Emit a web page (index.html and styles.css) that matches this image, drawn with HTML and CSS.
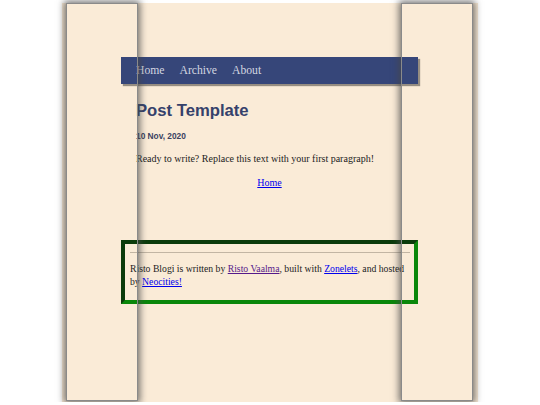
FILE: index.html
```html
<!DOCTYPE html>
<html lang="en">
<head>
<meta charset="utf-8">
<title>Post Template</title>
<link rel="stylesheet" href="styles.css">
</head>
<body>
<div class="page">
  <div class="pillar pillar-left"></div>
  <div class="pillar pillar-right"></div>
  <div class="content">
    <nav class="nav">
      <a href="#">Home</a>
      <a href="#">Archive</a>
      <a href="#">About</a>
    </nav>
    <main class="post">
      <h1 class="title">Post Template</h1>
      <p class="date">10 Nov, 2020</p>
      <p class="text">Ready to write? Replace this text with your first paragraph!</p>
      <p class="text center"><a href="#">Home</a></p>
    </main>
    <footer class="footer">
      <hr class="rule">
      <p class="text footer-text">Risto Blogi is written by <a class="visited" href="#">Risto Vaalma</a>, built with <a href="#">Zonelets</a>, and hosted by <a href="#">Neocities!</a></p>
    </footer>
  </div>
</div>
</body>
</html>
```
FILE: styles.css
```css
html, body {
  margin: 0;
  padding: 0;
  background: #ffffff;
}

.page {
  position: relative;
  width: 416px;
  height: 399px;
  margin: 3px auto 0;
  background: #faebd7;
}

.pillar {
  position: absolute;
  top: 0;
  bottom: 1px;
  width: 70px;
  border: 1px solid #8a8a8a;
  box-shadow: 0 0 7px 2px rgba(70, 70, 70, 0.75);
  z-index: 2;
  pointer-events: none;
}

.pillar-left {
  left: 4px;
}

.pillar-right {
  left: 339px;
}

.content {
  width: 297px;
  margin-left: 59px;
  padding-top: 54px;
}

.nav {
  display: flex;
  gap: 15px;
  height: 27px;
  padding-left: 15px;
  background: #364679;
  box-shadow: 2px 2px 1px rgba(0, 0, 0, 0.4);
}

.nav a {
  font: 11.67px/27px "Liberation Serif", serif;
  color: #d3d6e0;
  text-decoration: none;
}

.post {
  padding: 0 15px;
}

.title {
  margin: 17px 0 0;
  font: 700 16.67px/20px "Liberation Sans", Arial, sans-serif;
  color: #35416b;
}

.date {
  margin: 10px 0 0;
  font: 700 8.33px/10px "Liberation Sans", Arial, sans-serif;
  color: #3b4261;
}

.text {
  margin: 12px 0 0;
  font: 10px/12px "Liberation Serif", serif;
  color: #222222;
}

.center {
  margin-top: 12px;
  text-align: center;
}

a {
  color: #0000ee;
}

a.visited {
  color: #551a8b;
}

.footer {
  margin-top: 51px;
  border: 4px solid;
  border-color: #0b3b0b #0a870a #0a870a #0b3b0b;
  padding: 0 4px 12px 5px;
}

.rule {
  margin: 8px 0 0;
  height: 0;
  border: 0;
  border-top: 1px solid #c2b5a3;
}

.footer-text {
  margin-top: 9px;
  font-size: 9.7px;
  line-height: 13px;
}
```
